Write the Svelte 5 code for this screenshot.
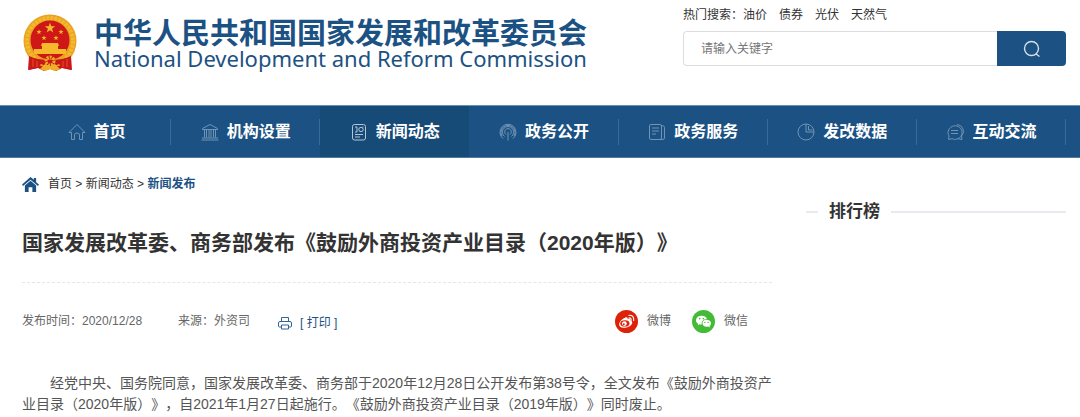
<script>
  const hotWords = ['油价', '债券', '光伏', '天然气']
  const menu = [
    { label: '首页', icon: 'home' },
    { label: '机构设置', icon: 'bank' },
    { label: '新闻动态', icon: 'news' },
    { label: '政务公开', icon: 'signal' },
    { label: '政务服务', icon: 'doc' },
    { label: '发改数据', icon: 'pie' },
    { label: '互动交流', icon: 'chat' },
  ]

  let active = $state('新闻动态')
  let keyword = $state('')
</script>

{#snippet star(x, y, r)}
  <path
    transform="translate({x} {y}) scale({r})"
    d="M0-1 .23-.32.95-.31.37.12.59.81 0 .4-.59.81-.37.12-.95-.31-.23-.32Z"
  />
{/snippet}

{#snippet menuIcon(name)}
  <svg class="icon" viewBox="0 0 18 18" aria-hidden="true">
    {#if name === 'home'}
      <path d="M1 9.500 9 1.500l8 8h-2.500V16.500h-3V12q0-2-2.500-2t-2.500 2v4.500h-3V9.500z" />
    {:else if name === 'bank'}
      <path d="M1.500 5.500 9 1.500l7.500 4v1h-15zM3.500 7v7.500M5.500 7v7.500M8 7v7.500M10 7v7.500M12.500 7v7.500M14.500 7v7.500M1 15h16M.5 17h17" />
    {:else if name === 'news'}
      <rect x="2.500" y="1.500" width="13" height="15.500" rx="2" />
      <circle cx="11" cy="6.500" r="2.200" />
      <path d="M5 4h2v5H5M5 11.500h8M5 14h5M13 3.500v1" />
    {:else if name === 'signal'}
      <path d="M4 15.500a8 8 0 1 1 10 0M5.500 13.500a5.600 5.600 0 1 1 7 0M7 11.500a3.300 3.300 0 1 1 4 0M3 13a7 7 0 1 1 12 0" />
      <path d="M9 9v8.500" />
    {:else if name === 'doc'}
      <rect x="1.500" y="1.500" width="12" height="15" rx="1.500" />
      <path d="M13.500 2.500q3 0 3 2V15q0 1.500-2 1.500h-3M4 5h7M4 8h7M4 11h4" />
    {:else if name === 'pie'}
      <path d="M9 1a8 8 0 1 0 8 8M9 1v8h8a8 8 0 0 0-8-8M11.500 3v4h4" />
    {:else}
      <path d="M2.500 16.500l.5-3.500a7 6.800 0 1 1 3 2.700zM11 1.500a7 6.800 0 0 1 4.500 11.500l.5 3.500-4.500-1M5 7.500h7M5 10.500h7" />
    {/if}
  </svg>
{/snippet}

<header class="header">
  <a class="logo" href="#home">
    <svg class="emblem" viewBox="0 0 54 58" aria-hidden="true">
      <path d="M7 38 6 56l9-2 6 3 6-2 6 2 6-3 9 2-1-18z" fill="#c91818" />
      <circle cx="27" cy="27" r="26.500" fill="#e9a21d" />
      <circle cx="27" cy="27" r="23" fill="none" stroke="#f3b832" stroke-width="4" stroke-dasharray="3 1" />
      <circle cx="27" cy="26" r="19.500" fill="#cf1717" />
      <g fill="#f5b92b">
        {@render star(27, 14, 5.5)}
        {@render star(16, 18, 2.8)}
        {@render star(38, 18, 2.8)}
        {@render star(21, 24, 2.8)}
        {@render star(33, 24, 2.8)}
        <path d="M19 29h16l1 3h-1v3h8v5H11v-5h8v-3h-1z" />
      </g>
      <path d="M6 42q8 4 21 4t21-4l1 14-9-2-4-4-9 4-9-4-4 4-9 2z" fill="#c91818" />
      <path d="M10 45v8M14 47v6M40 47v6M44 45v8" stroke="#ed4d27" />
      <path d="m17 55 5-5 5 2 5-2 5 5-5 2-5-2-5 2z" fill="#f1af28" />
      <circle cx="27" cy="47" r="4" fill="none" stroke="#f1af28" stroke-width="3" stroke-dasharray="2 1" />
    </svg>
    <span class="name">
      <strong>中华人民共和国国家发展和改革委员会</strong>
      <span lang="en">National Development and Reform Commission</span>
    </span>
  </a>
  <div class="search">
    <div class="hot">
      <span>热门搜索：</span>
      {#each hotWords as word}
        <a href="#search">{word}</a>
      {/each}
    </div>
    <form onsubmit={(e) => e.preventDefault()}>
      <input type="text" aria-label="搜索" placeholder="请输入关键字" bind:value={keyword} />
      <button type="submit" aria-label="提交搜索">
        <svg viewBox="0 0 18 18" aria-hidden="true">
          <circle cx="8.500" cy="8.500" r="7" />
          <path d="m13 14 3.500 2.500" />
        </svg>
      </button>
    </form>
  </div>
</header>

<nav class="menu">
  {#each menu as item}
    <a
      href="#{item.icon}"
      class:active={active === item.label}
      onclick={() => (active = item.label)}
    >
      {@render menuIcon(item.icon)}
      {item.label}
    </a>
  {/each}
</nav>

<div class="page">
  <main>
    <div class="crumbs">
      <svg viewBox="0 0 18 16" aria-hidden="true">
        <path d="M9 0 0 8l1 1.500L9 3l8 6.500L18 8l-3-2.500V1h-2.500v2z" />
        <path d="M9 4 3 9v7h4v-5h4v5h4V9z" />
      </svg>
      <span>
        <a href="#home">首页</a> &gt; <a href="#news">新闻动态</a> &gt; <a class="current" href="#release">新闻发布</a>
      </span>
    </div>

    <h1>国家发展改革委、商务部发布《鼓励外商投资产业目录（2020年版）》</h1>

    <div class="meta">
      <span class="date">发布时间：2020/12/28</span>
      <span class="source">来源：外资司</span>
      <button class="print" onclick={() => window.print()}>
        <svg viewBox="0 0 14 14" aria-hidden="true">
          <path d="M3.500 5.500v-4h7v4M3 11H1.500Q.5 11 .5 10V7q0-1.500 1.500-1.500h10q1.500 0 1.500 1.500v3q0 1-1 1H11M3.500 9h7v4h-7z" />
        </svg>
        [ 打印 ]
      </button>
      <div class="share">
        <a href="#weibo">
          <svg viewBox="0 0 24 24" aria-hidden="true">
            <circle cx="12" cy="12" r="12" fill="#dc2309" />
            <path d="M10.500 8c2-1 3 0 2.600 1.500 2-.8 3.600-.2 3 1.500 5 2-.5 7.500-6 7.500C1.500 18.500 3.500 11 10.500 8" fill="#fff" />
            <ellipse cx="10.300" cy="14" rx="4.800" ry="3.300" fill="#dc2309" />
            <circle cx="9.800" cy="14.200" r="2.500" fill="#fff" />
            <circle cx="9.200" cy="14.800" r="1" fill="#dc2309" />
            <path d="M14.500 8.300q2.600-.3 2.300 2.500M14.500 5.500q5.500-.3 5 5.500" fill="none" stroke="#fff" stroke-width="1.200" stroke-linecap="round" />
          </svg>
          微博
        </a>
        <a href="#weixin">
          <svg viewBox="0 0 24 24" aria-hidden="true">
            <circle cx="12" cy="12" r="12" fill="#43bb36" />
            <path d="M10 6c-7 0-7 7-3.500 8.300L6 16l2.200-1.200q1 .3 2 .2-1-5 5.300-5.600Q14.500 6 10 6" fill="#fff" />
            <path d="M15 10.200c-5.500 0-5.500 7.300.5 7.300l1.300-.2 1.900 1-.4-1.600c3-2 1.700-6.500-3.300-6.500" fill="#fff" />
            <g fill="#43bb36">
              <circle cx="8" cy="9" r=".8" />
              <circle cx="11.800" cy="9" r=".8" />
              <circle cx="13.500" cy="13" r=".7" />
              <circle cx="16.800" cy="13" r=".7" />
            </g>
          </svg>
          微信
        </a>
      </div>
    </div>

    <p class="content">
      经党中央、国务院同意，国家发展改革委、商务部于2020年12月28日公开发布第38号令，全文发布《鼓励外商投资产业目录（2020年版）》，自2021年1月27日起施行。《鼓励外商投资产业目录（2019年版）》同时废止。
    </p>
  </main>

  <aside>
    <h2>排行榜</h2>
  </aside>
</div>

<style>
  :global(body) {
    background: #fff;
    color: #333;
    font: 12px/18px "Liberation Sans", "Noto Sans CJK SC", sans-serif;
    text-spacing-trim: space-all;
  }

  a {
    color: inherit;
    text-decoration: none;
  }

  .header {
    display: flex;
    justify-content: space-between;
    box-sizing: border-box;
    height: 105px;
    padding: 6px 14px 0 22px;
  }

  .logo {
    display: flex;
    gap: 16px;
    align-items: flex-start;
    color: #1c5283;
  }
  .emblem {
    width: 56px;
    height: 58px;
    margin-top: 8px;
  }
  .name {
    display: flex;
    flex-direction: column;
    padding-top: 13px;
    white-space: nowrap;

    strong {
      font-size: 29px;
      line-height: 30px;
    }
    span {
      font-family: "Noto Sans", "Open Sans", sans-serif;
      font-size: 22px;
      line-height: 18px;
    }
  }

  .search {
    width: 383px;
  }
  .hot {
    display: flex;
    gap: 12px;

    span {
      margin-right: -12px;
    }
  }
  form {
    display: flex;
    height: 35px;
    margin-top: 7px;

    input {
      flex: 1;
      min-width: 0;
      padding: 0 17px;
      border: 1px solid #ddd;
      border-right: 0;
      border-radius: 4px 0 0 4px;
      font: inherit;
    }
    input::placeholder {
      color: #757575;
    }
    button {
      width: 69px;
      padding: 0;
      border: 0;
      border-radius: 0 4px 4px 0;
      background: #1c5283;
      cursor: pointer;
    }
    svg {
      display: block;
      width: 18px;
      margin: 0 auto;
      fill: none;
      stroke: #d5e0ea;
      stroke-width: 1.4;
    }
  }

  .menu {
    display: flex;
    padding: 0 14px 0 22px;
    border-top: 1px solid #6a8fb0;
    border-bottom: 1px solid #4f7ba2;
    background: #1c5283;
    color: #fff;

    a {
      flex: 1;
      display: flex;
      align-items: center;
      justify-content: center;
      gap: 8px;
      height: 51px;
      background: linear-gradient(#3b6a96, #3b6a96) right center / 1px 26px no-repeat;
      font-size: 16px;
      font-weight: bold;
    }
    a.active {
      background: #164a77;
    }
  }
  .icon {
    width: 18px;
    height: 18px;
    fill: none;
    stroke: #6f94b5;
    stroke-width: 1;
  }
  .active .icon {
    stroke: #b4c6d6;
  }

  .page {
    display: flex;
    gap: 34px;
    padding: 0 14px 0 22px;
  }
  main {
    flex: 1;
    min-width: 0;
  }

  .crumbs {
    display: flex;
    align-items: center;
    gap: 9px;
    padding-top: 17px;

    svg {
      width: 17px;
      height: 15px;
      fill: #1c5283;
    }
    .current {
      color: #1c5283;
      font-weight: bold;
    }
  }

  h1 {
    margin: 0;
    padding: 35px 0 24px;
    border-bottom: 1px dashed #e6e6e6;
    font-size: 21px;
    line-height: 30px;
  }

  .meta {
    display: flex;
    align-items: center;
    height: 24px;
    padding-top: 26px;
    color: #666;
  }
  .source {
    margin-left: 36px;
  }
  .print {
    display: flex;
    align-items: center;
    gap: 8px;
    margin-left: 28px;
    padding: 3px 0 0;
    border: 0;
    background: none;
    color: #1c5283;
    font: inherit;
    cursor: pointer;

    svg {
      width: 14px;
      height: 14px;
      fill: none;
      stroke: #336493;
    }
  }
  .share {
    display: flex;
    gap: 21px;
    margin-left: auto;
    padding-right: 24px;

    a {
      display: flex;
      align-items: center;
      gap: 9px;
    }
    svg {
      width: 23px;
      height: 23px;
    }
  }

  .content {
    margin: 40px 0 0;
    color: #555;
    font-size: 14px;
    line-height: 21px;
    text-indent: 2em;
  }

  aside {
    width: 260px;
  }
  h2 {
    display: flex;
    align-items: center;
    gap: 11px;
    margin: 42px 0 0;
    font-size: 17px;
    line-height: 24px;
  }
  h2::before,
  h2::after {
    content: "";
    width: 12px;
    height: 2px;
    background: #e9e9ef;
  }
  h2::after {
    flex: 1;
  }
</style>
